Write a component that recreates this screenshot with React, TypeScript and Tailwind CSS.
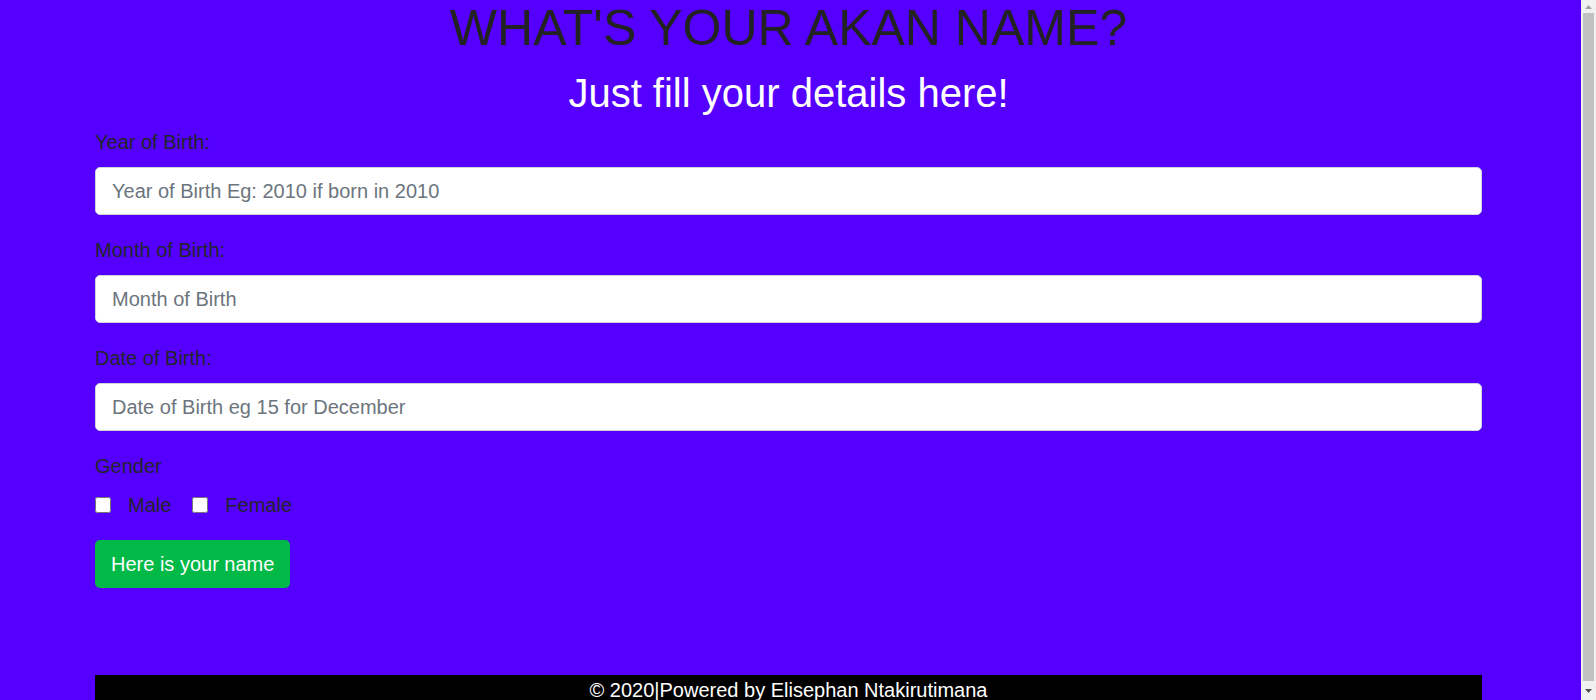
import React from 'react'

const fields = [
  { label: 'Year of Birth:', placeholder: 'Year of Birth Eg: 2010 if born in 2010' },
  { label: 'Month of Birth:', placeholder: 'Month of Birth' },
  { label: 'Date of Birth:', placeholder: 'Date of Birth eg 15 for December' },
]

const ScrollBar = () => (
  <div className="flex h-[700px] w-[15px] shrink-0 flex-col bg-[#f1f1f1]">
    <div className="flex h-[13px] items-center justify-center">
      <svg width="7" height="4" viewBox="0 0 7 4">
        <path d="M0 4 L3.5 0 L7 4 Z" fill="#a3a3a3" />
      </svg>
    </div>
    <div className="mx-[2px] flex-1 bg-[#c1c1c1]" />
    <div className="flex h-[19px] items-center justify-center">
      <svg width="7" height="4" viewBox="0 0 7 4">
        <path d="M0 0 L7 0 L3.5 4 Z" fill="#505050" />
      </svg>
    </div>
  </div>
)

const App = () => {
  return (
    <div className="flex bg-[#5500ff] font-['Liberation_Sans',Arial,sans-serif] text-[#212529]">
      <main className="flex-1">
        <div className="ml-[95px] w-[1387px]">
          <h1 className="text-center text-[50px] leading-[57px] font-normal text-[#222222]">
            WHAT'S YOUR AKAN NAME?
          </h1>
          <h2 className="mt-[12px] text-center text-[40px] leading-[48px] font-normal text-white">
            Just fill your details here!
          </h2>

          <form className="pt-[10px]" onSubmit={(e) => e.preventDefault()}>
            {fields.map((field) => (
              <div key={field.label} className="mb-[20px]">
                <label className="mb-[10px] block text-[20px] leading-[30px]">{field.label}</label>
                <input
                  type="text"
                  placeholder={field.placeholder}
                  className="block h-[48px] w-full rounded-[5px] border border-[#ced4da] bg-white px-4 text-[20px] text-[#495057] outline-none placeholder:text-[#6c757d]"
                />
              </div>
            ))}

            <div>
              <label className="block text-[20px] leading-[30px]">Gender</label>
              <div className="mt-[9px] flex h-[30px] items-center text-[20px]">
                <input type="checkbox" className="m-0 h-4 w-4" />
                <span className="ml-[17px]">Male</span>
                <input type="checkbox" className="m-0 ml-[21px] h-4 w-4" />
                <span className="ml-[17px]">Female</span>
              </div>
            </div>

            <button
              type="submit"
              className="mt-[20px] h-[48px] rounded-[5px] bg-[#00b946] px-4 text-[20px] leading-[30px] text-white"
            >
              Here is your name
            </button>
          </form>

          <footer className="mt-[87px] bg-black text-center text-[20px] leading-[30px] text-white">
            © 2020|Powered by Elisephan Ntakirutimana
          </footer>
        </div>
      </main>
      <ScrollBar />
    </div>
  )
}

export default App
